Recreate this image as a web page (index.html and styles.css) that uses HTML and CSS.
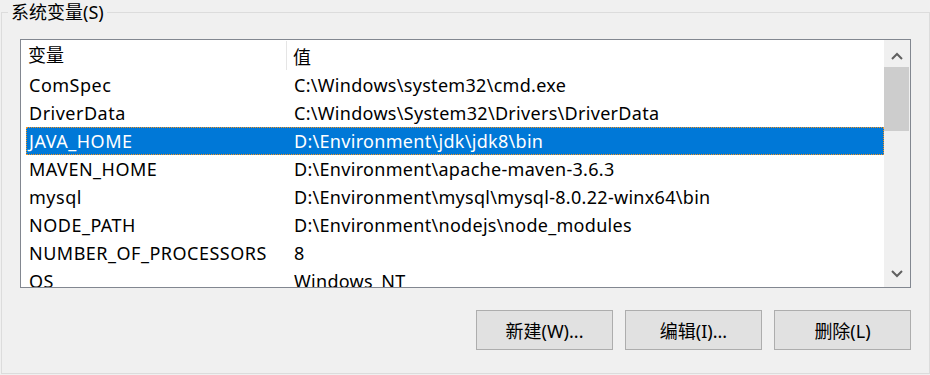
FILE: index.html
```html
<!DOCTYPE html>
<html lang="zh-CN">
<head>
    <meta charset="UTF-8">
    <title>系统变量</title>
    <link rel="stylesheet" href="styles.css">
</head>
<body>

<div class="group">
    <div class="group-title">系统变量(S)</div>

    <div class="listbox">
        <div class="list">
            <div class="list-header">
                <div class="head-name">变量</div>
                <div class="head-value">值</div>
            </div>
            <div class="row"><div class="name">ComSpec</div><div class="value">C:\Windows\system32\cmd.exe</div></div>
            <div class="row"><div class="name">DriverData</div><div class="value">C:\Windows\System32\Drivers\DriverData</div></div>
            <div class="row selected"><div class="name">JAVA_HOME</div><div class="value">D:\Environment\jdk\jdk8\bin</div></div>
            <div class="row"><div class="name">MAVEN_HOME</div><div class="value">D:\Environment\apache-maven-3.6.3</div></div>
            <div class="row"><div class="name">mysql</div><div class="value">D:\Environment\mysql\mysql-8.0.22-winx64\bin</div></div>
            <div class="row"><div class="name">NODE_PATH</div><div class="value">D:\Environment\nodejs\node_modules</div></div>
            <div class="row"><div class="name">NUMBER_OF_PROCESSORS</div><div class="value">8</div></div>
            <div class="row"><div class="name">OS</div><div class="value">Windows_NT</div></div>
        </div>
        <div class="scrollbar">
            <div class="arrow arrow-up">
                <svg width="12" height="8" viewBox="0 0 12 8"><polyline points="1,7 6,2 11,7" fill="none" stroke="#606060" stroke-width="2"/></svg>
            </div>
            <div class="track">
                <div class="thumb"></div>
            </div>
            <div class="arrow arrow-down">
                <svg width="12" height="8" viewBox="0 0 12 8"><polyline points="1,1 6,6 11,1" fill="none" stroke="#606060" stroke-width="2"/></svg>
            </div>
        </div>
    </div>

    <div class="buttons">
        <button class="btn">新建(W)...</button>
        <button class="btn">编辑(I)...</button>
        <button class="btn">删除(L)</button>
    </div>
</div>

</body>
</html>
```

FILE: styles.css
```css
body {
    font-family: "Noto Sans", "Noto Sans CJK SC", sans-serif;
    font-size: 18px;
    margin: 0;
    background-color: #f0f0f0;
    color: #000;
}
.group {
    margin: 12px 0 0 1px;
    width: 927px;
    height: 360px;
    border: 1px solid #dcdcdc;
}
.group-title {
    width: fit-content;
    margin: -12px 0 0 6px;
    padding: 0 3px;
    line-height: 22px;
    background-color: #f0f0f0;
}
.listbox {
    display: flex;
    margin: 16px 0 0 18px;
    width: 889px;
    height: 247px;
    border: 1px solid #828790;
    background-color: white;
}
.list {
    flex: 1;
    overflow: hidden;
}
.list-header {
    display: flex;
    height: 31px;
    align-items: center;
}
.head-name {
    width: 258px;
    padding-left: 7px;
    height: 29px;
    line-height: 29px;
    border-right: 1px solid #e5e5e5;
}
.head-value {
    padding-left: 6px;
}
.row {
    display: flex;
    height: 28px;
    line-height: 26px;
    margin-left: 5px;
    border: 1px dotted transparent;
    box-sizing: border-box;
    white-space: nowrap;
}
.row .name {
    width: 258px;
    padding-left: 2px;
    letter-spacing: 0.5px;
}
.row .value {
    padding-left: 7px;
    letter-spacing: 0.3px;
}
.row.selected {
    background-color: #0078d7;
    color: white;
    border-color: #f7931e;
}
.scrollbar {
    width: 26px;
    display: flex;
    flex-direction: column;
    background-color: #f0f0f0;
}
.arrow {
    height: 26px;
    display: flex;
    justify-content: center;
    align-items: center;
}
.arrow-up {
    padding-top: 4px;
    height: 23px;
}
.track {
    flex: 1;
}
.thumb {
    height: 64px;
    margin-right: 1px;
    background-color: #cdcdcd;
}
.buttons {
    display: flex;
    justify-content: flex-end;
    gap: 12px;
    margin: 22px 18px 0 0;
}
.btn {
    width: 137px;
    height: 40px;
    font-family: "Noto Sans", "Noto Sans CJK SC", sans-serif;
    font-size: 18px;
    background-color: #e1e1e1;
    border: 1px solid #adadad;
    color: #000;
    padding: 0;
}
```
